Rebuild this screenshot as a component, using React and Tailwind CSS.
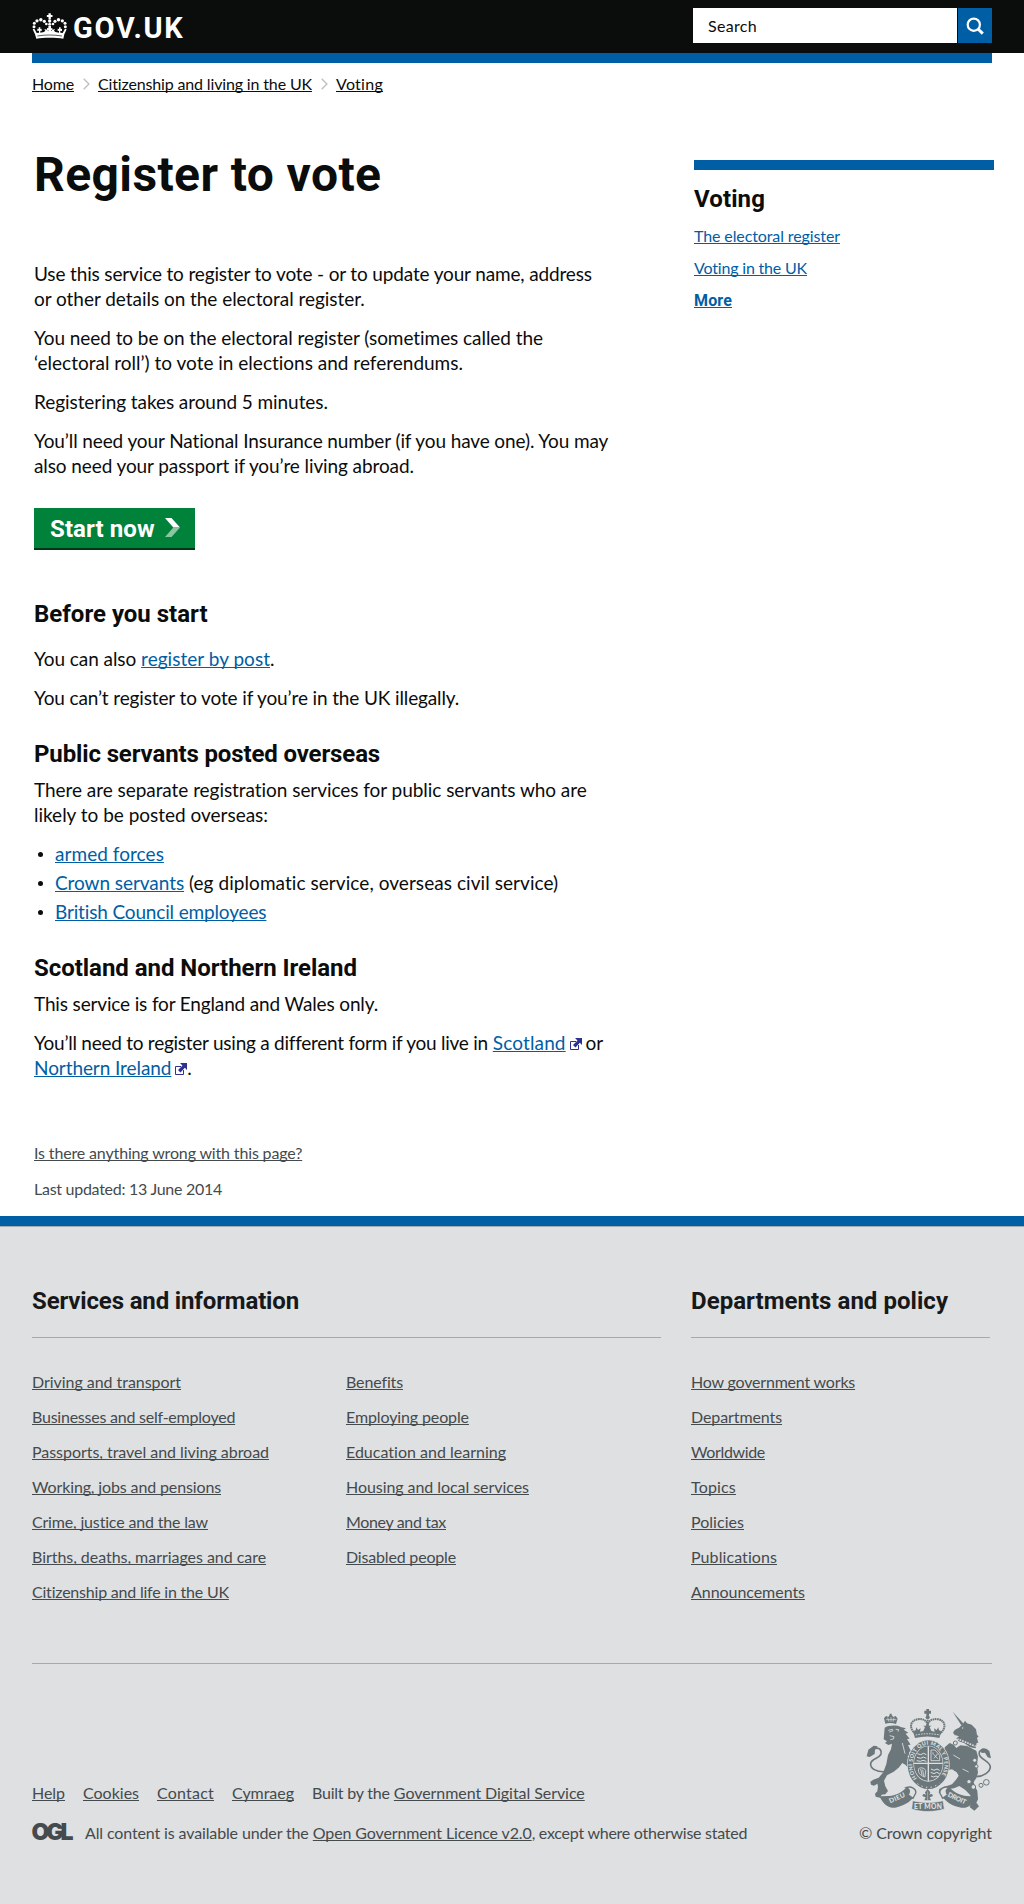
import React from "react";

const TEXT = "font-['Lato',sans-serif] font-normal";
const BOLD = "font-['Roboto',sans-serif] font-bold";
const UNDERLINE =
  "underline decoration-1 underline-offset-[1px] [text-decoration-skip-ink:none]";

function Link({ className = "", children }) {
  return (
    <a href="#" className={`${UNDERLINE} ${className}`}>
      {children}
    </a>
  );
}

function CrownIcon() {
  return (
    <svg width="35" height="27" viewBox="96 38 105 81" fill="#fff" aria-hidden="true">
      <path d="M145.500 39h7v5h5v6h-5v7h-7v-7h-5v-6h5z" />
      <circle cx="149" cy="62" r="5" />
      <circle cx="149" cy="72" r="4.500" />
      <circle cx="102" cy="79" r="4.500" />
      <circle cx="103" cy="69" r="4.500" />
      <circle cx="111" cy="61.500" r="5" />
      <circle cx="122.500" cy="58.500" r="5.200" />
      <circle cx="133" cy="63" r="4.800" />
      <circle cx="139" cy="71" r="4" />
      <circle cx="196" cy="79" r="4.500" />
      <circle cx="195" cy="69" r="4.500" />
      <circle cx="187" cy="61.500" r="5" />
      <circle cx="175.500" cy="58.500" r="5.200" />
      <circle cx="165" cy="63" r="4.800" />
      <circle cx="159" cy="71" r="4" />
      <path d="M98 87L103 85L110 98L117 97V91L112 92V85L116 86V81H121V86L125 85V92L121 91V97L132 95L136 91L133 86L141 88L145 93V89L141 90V83L145 84V77H153V84L157 83V90L153 89V93L157 88L165 86L162 91L166 95L177 97V91L173 92V85L177 86V81H182V86L186 85V92L181 91V97L188 98L195 85L200 87L193 102L190 115C168 111 130 111 109 115L105 102Z" />
      <path d="M112 107c22-4 51-4 74 0" fill="none" stroke="#0b0c0c" strokeWidth="2" />
    </svg>
  );
}

function SearchIcon() {
  return (
    <svg width="18" height="18" viewBox="0 0 18 18" fill="none" stroke="#fff" aria-hidden="true">
      <circle cx="7.800" cy="7.700" r="6.100" strokeWidth="2.200" />
      <path d="M12 12l4.800 4.600" strokeWidth="3" />
    </svg>
  );
}

function Chevron() {
  return (
    <svg width="7" height="12" viewBox="0 0 7 12" className="mr-2 ml-[9px] mt-px shrink-0" fill="none" stroke="#bfc1c3" strokeWidth="1.400" aria-hidden="true">
      <path d="M.7.7L5.900 6 .7 11.300" />
    </svg>
  );
}

function StartArrow() {
  return (
    <svg width="15" height="19" viewBox="0 0 15 19" className="-mt-[3px] ml-[10px]" aria-hidden="true">
      <path d="M0 0h6.500L15 9.500H8.300z" fill="#fff" />
      <path d="M8.300 9.500H15L6.500 19H0z" fill="#8cc5a2" />
    </svg>
  );
}

function ExternalIcon() {
  return (
    <svg width="12" height="12" viewBox="0 0 12 12" className="ml-1 inline-block align-baseline" aria-hidden="true">
      <path d="M6 3.500H.5v8h8V7" fill="none" stroke="#2e3191" />
      <path d="M5 0h7v7L9.800 4.800 5.500 9.500 3 7l4.500-4.500z" fill="#2e3191" />
    </svg>
  );
}

function OglLogo() {
  return (
    <svg width="42" height="19" viewBox="0 0 42 19" className="mr-[11px] shrink-0 overflow-visible" aria-label="OGL">
      <text x="-.5" y="16.500" textLength="42" lengthAdjust="spacing" fill="#454a4c" className="font-['Inter',sans-serif] text-[23px] font-black">
        OGL
      </text>
    </svg>
  );
}

function RoyalArms() {
  const c = "#6c777b";
  const bg = "#dee0e2";
  return (
    <svg width="128" height="103" viewBox="19 26 384 309" fill={c} className="-mr-[2px]" aria-hidden="true">
      <defs>
        <path id="garter" d="M172 234A48 59 0 1 1 240 234" />
      </defs>
      {/* crown above the shield */}
      <path d="M200 26h8v5h6v9h-6v6h-8v-6h-6v-9h6z" />
      <circle cx="204" cy="51" r="6" />
      <path d="M167 100C148 84 150 62 173 57C191 54 203 61 204 76C205 61 218 54 236 57C259 62 260 84 241 100" fill="none" stroke={c} strokeWidth="6" strokeDasharray="5 1.500" />
      <path d="M204 58v42" stroke={c} strokeWidth="6" strokeDasharray="5 1.500" />
      <path d="M160 93l8-3 2-9 5 8 8-5-2 10 10-2 5-12-6-4h9l4-8 4 8h9l-6 4 5 12 10 2-2-10 8 5 5-8 2 9 8 3-7 20c-24-6-48-6-73 0z" />
      <path d="M168 104c24-5 49-5 73 0" fill="none" stroke={bg} strokeWidth="2.500" strokeDasharray="5 3" />

      {/* lion */}
      <path d="M77 70l-4-16 6-7 7 3 4-6V40h6v4l5 6 7-3 6 8-5 16c-11-4-22-4-32-1z" />
      <path d="M79 58h31M84 52l4 12M103 52l-3 12M94 50v14" stroke={bg} strokeWidth="2" />
      <path d="M75 82c10-8 38-8 48-2l16 4-7 4 14 9-8 3 12 15-8 1 11 17-8 1 10 21-7-1 3 14-8-2 10 19 14 8 6 14-8 8-13-5-14-16-10-6-11 14-15 12-20 11-9 16 4 17 8 14-8 10-11 1-5 9-13-3-2-9 7-7 2-14-2-9-10 6-9-3-2-9 9-6 16-6 14-16 9-25 5-27 9-17 3-17-11 4-10-6 6-5-10-6z" />
      <path d="M86 90l12-3 2 4-11 4M108 87l9 1-2 6M90 106l13 3-2 7-9 2M128 128l8 32M112 208l14-10M92 222l-8 12" fill="none" stroke={bg} strokeWidth="2.500" />
      <path d="M76 214c-22 2-45-8-43-25 3-14 26-14 31-28 3-11-5-20-16-17-9 3-17 9-20 18" fill="none" stroke={c} strokeWidth="5" />
      <path d="M21 168l5-20 16-12 12 2-8 10-1 13-15 9z" />

      {/* unicorn */}
      <path d="M279 34l33 36-7 5z" />
      <path d="M304 76l8-8 4-7 6 8 14 4 13 14 3 17 5 4-5 5 4 15-5-1-3 17-17-3-18-13-16-5-7-9 8-6-13-4-5-7 5-8 15-8z" />
      <path d="M293 116c14 4 34 14 55 22" fill="none" stroke={bg} strokeWidth="5" strokeDasharray="5 3" />
      <circle cx="309" cy="83" r="2" fill={bg} />
      <path d="M256 140l14-12 12 5 8 10 12-8 20 2 28 14 5 18-3 26 3 22-5 16-8 12 3 12 8 14 2 26-5 10 8 11-14 13-14-11 5-13-3-22-15-16-18-12-16 7-22 3-12 14-12-4 2-11 14-6 24-8 12-14 8-12-6-10-14-9-11 2-11 14-9 0 6 8-10 2-8-12 12-20 18-4-3-8-17-1-12 8-6-8 4-8 15-3 18 0-2-7-10-6-8 7z" />
      <path d="M281 164l20 12M309 206l18 9" stroke={bg} strokeWidth="2.500" />
      <path d="M350 229c22-1 41-14 42-29 0-17-29-22-33-37-3-15 13-18 22-7" fill="none" stroke={c} strokeWidth="5" />
      <path d="M361 150c8-11 20-6 28 2l5 22-10-3-8-14-10 1z" />
      <g fill={bg} stroke={c} strokeWidth="3">
        <circle cx="287" cy="128" r="6" />
        <circle cx="345" cy="180" r="6" />
        <circle cx="350" cy="198" r="5" />
        <circle cx="328" cy="244" r="6.500" />
        <circle cx="341" cy="260" r="7" />
        <circle cx="364" cy="255" r="6" />
        <circle cx="380" cy="246" r="8.500" />
      </g>

      {/* garter and shield */}
      <ellipse cx="206" cy="193" rx="64" ry="75" fill={bg} />
      <ellipse cx="206" cy="193" rx="62" ry="73" />
      <ellipse cx="206" cy="190" rx="45" ry="54" fill={bg} />
      <ellipse cx="206" cy="190" rx="43" ry="52" />
      <path d="M206 138v104M163 189h86" stroke={bg} strokeWidth="4" />
      <path d="M173 160l10 3 9-4 8 4M172 171l11 3 8-4 9 4M171 181l11 2 8-3 10 3M214 206l9 4 9-4 8 4M213 216l10 4 8-4 9 4M214 227l8 3 7-3 7 3" fill="none" stroke={bg} strokeWidth="3" />
      <path d="M214 149h12l14 16v16h-26zM222 162l12 13M223 174l11-14M220 156v6" fill="none" stroke={bg} strokeWidth="2.500" />
      <path d="M177 205c8-6 20 0 21 6l-2 19c-15-4-22-14-19-25zM183 206l4 18M189 208l3 19" fill="none" stroke={bg} strokeWidth="2.500" />
      <text fill={bg} className="font-['Lato',sans-serif] text-[16px] font-black">
        <textPath href="#garter" textLength="246" lengthAdjust="spacing">HONI SOIT QUI MAL Y PENSE</textPath>
      </text>
      <path d="M173 250c20 15 47 15 66-1" fill="none" stroke={bg} strokeWidth="3" strokeDasharray="4 10" />

      {/* motto ribbon */}
      <path d="M59 288l29-1c22-2 40-11 53-27l23 12-2 18c-12 17-32 27-56 32-21 4-36-13-47-34z" />
      <path d="M353 289l-31-2c-22-2-40-11-53-27l-22 12 2 18c12 17 32 28 56 32 21 3 37-13 48-33z" />
      <path d="M139 262c16-6 32 4 29 17l-8 15-17-12c8-3 10-15-4-20zM270 262c-16-6-32 4-29 17l8 15 17-12c-8-3-10-15 4-20z" fill={bg} stroke={c} strokeWidth="4" />
      <path d="M159 301c26 7 66 7 91 0l4 25c-27 10-72 10-98 0z" stroke={bg} strokeWidth="2" />
      <g fill={bg} className="font-['Lato',sans-serif] text-[20px] font-black">
        <text x="92" y="309" transform="rotate(-24 92 309)" textLength="50" lengthAdjust="spacing">DIEU</text>
        <text x="163" y="326" textLength="84" lengthAdjust="spacing">ET MON</text>
        <text x="263" y="288" transform="rotate(25 263 288)" textLength="58" lengthAdjust="spacing">DROIT</text>
      </g>
      <path d="M204 266l8 10-3 9c5-7 12-4 10 3l-9 3 4 9h-20l4-9-9-3c-2-7 5-10 10-3l-3-9z" />
      <path d="M204 273v26" stroke={bg} strokeWidth="1.500" />
    </svg>
  );
}

function Paragraph({ className = "", children }) {
  return <p className={`leading-[25px] whitespace-nowrap ${className}`}>{children}</p>;
}

function Heading({ className = "", children }) {
  return (
    <h2 className={`${BOLD} text-2xl leading-[30px] whitespace-nowrap ${className}`}>{children}</h2>
  );
}

function Bullet({ children }) {
  return (
    <li className="flex items-center whitespace-nowrap">
      <span className="mt-0.5 mr-3 ml-1 size-[5px] shrink-0 rounded-full bg-[#0b0c0c]" />
      <span>{children}</span>
    </li>
  );
}

const services = [
  ["Driving and transport", "tracking-[-0.04px]"],
  ["Businesses and self-employed", "tracking-[-0.23px]"],
  ["Passports, travel and living abroad", "tracking-[-0.04px]"],
  ["Working, jobs and pensions", "tracking-[-0.13px]"],
  ["Crime, justice and the law", "tracking-[-0.17px]"],
  ["Births, deaths, marriages and care", "tracking-[-0.04px]"],
  ["Citizenship and life in the UK", "tracking-[-0.21px]"],
];

const information = [
  ["Benefits", "tracking-[-0.14px]"],
  ["Employing people", "tracking-[-0.12px]"],
  ["Education and learning", "tracking-[0.005px]"],
  ["Housing and local services", "tracking-[-0.06px]"],
  ["Money and tax", "tracking-[-0.34px]"],
  ["Disabled people", "tracking-[-0.18px]"],
];

const departments = [
  ["How government works", "tracking-[-0.19px]"],
  ["Departments", "tracking-[-0.1px]"],
  ["Worldwide", "tracking-[-0.35px]"],
  ["Topics", "tracking-[0.17px]"],
  ["Policies", "tracking-[0.03px]"],
  ["Publications", "tracking-[0.08px]"],
  ["Announcements", "tracking-[-0.05px]"],
];

function LinkList({ items, className = "" }) {
  return (
    <ul className={`flex flex-col gap-[10px] leading-[25px] ${className}`}>
      {items.map(([label, tracking]) => (
        <li key={label}>
          <Link className={tracking}>{label}</Link>
        </li>
      ))}
    </ul>
  );
}

function Header() {
  return (
    <header>
      <div className="flex h-[53px] items-start justify-between bg-[#0b0c0c] px-8">
        <a href="#" className="flex items-start pt-[13px]">
          <CrownIcon />
          <span className={`${BOLD} ml-[6px] text-[29px] leading-[30px] tracking-[1.7px] text-white`}>GOV.UK</span>
        </a>
        <form className="mt-2 flex h-[35px] gap-px">
          <div className="flex w-[264px] items-center bg-white pl-[15px] text-[#0b0c0c]">
            <span className="tracking-[0.32px]">Search</span>
          </div>
          <button type="button" className="flex w-[34px] items-center justify-center bg-[#005ea5]" aria-label="Search">
            <SearchIcon />
          </button>
        </form>
      </div>
      <div className="mx-8 h-[10px] bg-[#005ea5]" />
      <nav className="flex items-center px-8 pt-2 leading-[25px] whitespace-nowrap">
        <Link className="w-[42px] tracking-[-0.16px]">Home</Link>
        <Chevron />
        <Link className="w-[214px] tracking-[-0.15px]">Citizenship and living in the UK</Link>
        <Chevron />
        <Link className="tracking-[0.27px]">Voting</Link>
      </nav>
    </header>
  );
}

function Article() {
  return (
    <article className="w-[694px] shrink-0 pl-[34px] text-[19px]">
      <h1 className={`${BOLD} pt-[54px] text-5xl leading-[50px] tracking-[0.4px]`}>Register to vote</h1>
      <Paragraph className="mt-[61px]">
        <span className="tracking-[-0.15px]">Use this service to register to vote - or to update your name, address</span>
        <br />
        <span className="tracking-[-0.04px]">or other details on the electoral register.</span>
      </Paragraph>
      <Paragraph className="mt-[14px]">
        <span className="tracking-[-0.06px]">You need to be on the electoral register (sometimes called the</span>
        <br />
        <span className="tracking-[0.002px]">‘electoral roll’) to vote in elections and referendums.</span>
      </Paragraph>
      <Paragraph className="mt-[14px] tracking-[-0.07px]">Registering takes around 5 minutes.</Paragraph>
      <Paragraph className="mt-[14px]">
        <span className="tracking-[-0.11px]">You’ll need your National Insurance number (if you have one). You may</span>
        <br />
        <span className="tracking-[-0.1px]">also need your passport if you’re living abroad.</span>
      </Paragraph>

      <a href="#" className={`${BOLD} mt-[30px] flex h-10 w-[161px] items-center bg-[#00823b] pt-[2px] pl-4 text-2xl tracking-[0.1px] whitespace-nowrap text-white shadow-[0_2px_0_#003618]`}>
        Start now
        <StartArrow />
      </a>

      <Heading className="mt-[51px]">Before you start</Heading>
      <Paragraph className="mt-[17px]">
        <span className="tracking-[-0.06px]">You can also</span>{" "}
        <Link className="tracking-[0.03px] text-[#005ea5]">register by post</Link>.
      </Paragraph>
      <Paragraph className="mt-[14px] tracking-[-0.13px]">You can’t register to vote if you’re in the UK illegally.</Paragraph>

      <Heading className="mt-[29px] tracking-[-0.13px]">Public servants posted overseas</Heading>
      <Paragraph className="mt-2">
        <span className="tracking-[-0.05px]">There are separate registration services for public servants who are</span>
        <br />
        <span className="tracking-[-0.01px]">likely to be posted overseas:</span>
      </Paragraph>
      <ul className="mt-[14px] flex flex-col gap-1 leading-[25px]">
        <Bullet>
          <Link className="tracking-[0.05px] text-[#005ea5]">armed forces</Link>
        </Bullet>
        <Bullet>
          <Link className="tracking-[-0.06px] text-[#005ea5]">Crown servants</Link>{" "}
          <span className="tracking-[0.06px]">(eg diplomatic service, overseas civil service)</span>
        </Bullet>
        <Bullet>
          <Link className="tracking-[-0.15px] text-[#005ea5]">British Council employees</Link>
        </Bullet>
      </ul>

      <Heading className="mt-[29px] tracking-[-0.04px]">Scotland and Northern Ireland</Heading>
      <Paragraph className="mt-2 tracking-[-0.15px]">This service is for England and Wales only.</Paragraph>
      <Paragraph className="mt-[14px]">
        <span className="tracking-[-0.25px]">You’ll need to register using a different form if you live in</span>{" "}
        <Link className="tracking-[0.14px] text-[#005ea5]">
          Scotland
          <ExternalIcon />
        </Link>{" "}
        <span className="-ml-px">or</span>
        <br />
        <Link className="tracking-[-0.08px] text-[#005ea5]">
          Northern Ireland
          <ExternalIcon />
        </Link>
        .
      </Paragraph>

      <div className="mt-[60px] text-base leading-[25px] text-[#454a4c]">
        <p className="tracking-[-0.15px]">
          <Link>Is there anything wrong with this page?</Link>
        </p>
        <p className="mt-[11px] tracking-[-0.27px]">Last updated: 13 June 2014</p>
      </div>
    </article>
  );
}

function Sidebar() {
  return (
    <aside className="mt-16 w-[300px] shrink-0 self-start border-t-[10px] border-[#005ea5] pt-[14px]">
      <Heading className="tracking-[0.11px]">Voting</Heading>
      <ul className="mt-[9px] leading-[25px] text-[#005ea5]">
        <li>
          <Link className="tracking-[-0.11px]">The electoral register</Link>
        </li>
        <li className="mt-[7px]">
          <Link className="tracking-[-0.18px]">Voting in the UK</Link>
        </li>
        <li className={`${BOLD} mt-2`}>
          <Link className="tracking-[0.15px]">More</Link>
        </li>
      </ul>
    </aside>
  );
}

function Footer() {
  return (
    <footer className="mt-[15px] border-t-[10px] border-[#005ea5] text-[#454a4c]">
      <div className="h-[678px] border-t border-[#a1acb2] bg-[#dee0e2] px-8 pt-[59px] whitespace-nowrap">
        <div className="flex gap-[30px]">
          <section className="w-[629px]">
            <Heading className="tracking-[-0.15px] text-[#171819]">Services and information</Heading>
            <div className="mt-[21px] flex border-t border-[#a1acb2] pt-[31px]">
              <LinkList items={services} className="w-[314px]" />
              <LinkList items={information} />
            </div>
          </section>
          <section className="w-[299px]">
            <Heading className="tracking-[0.04px] text-[#171819]">Departments and policy</Heading>
            <div className="mt-[21px] border-t border-[#a1acb2] pt-[31px]">
              <LinkList items={departments} />
            </div>
          </section>
        </div>

        <div className="mt-[59px] flex items-end justify-between border-t border-[#a1acb2] pt-[45px]">
          <div className="leading-[25px]">
            <div className="flex gap-[18px]">
              <Link className="w-[33px] tracking-[-0.04px]">Help</Link>
              <Link className="w-[56px]">Cookies</Link>
              <Link className="w-[57px] tracking-[0.22px]">Contact</Link>
              <Link className="w-[62px] tracking-[-0.04px]">Cymraeg</Link>
              <span>
                <span className="tracking-[-0.22px]">Built by the</span>{" "}
                <Link className="tracking-[-0.06px]">Government Digital Service</Link>
              </span>
            </div>
            <div className="mt-[15px] flex items-center">
              <OglLogo />
              <span>
                <span className="tracking-[-0.13px]">All content is available under the</span>{" "}
                <Link className="tracking-[-0.12px]">Open Government Licence v2.0</Link>
                <span className="tracking-[-0.25px]">, except where otherwise stated</span>
              </span>
            </div>
          </div>
          <div className="flex flex-col items-end leading-[25px]">
            <RoyalArms />
            <span className="mt-2 tracking-[-0.07px]">© Crown copyright</span>
          </div>
        </div>
      </div>
    </footer>
  );
}

export default function App() {
  return (
    <div className={`${TEXT} w-full bg-white text-base text-[#0b0c0c]`}>
      <Header />
      <main className="flex">
        <Article />
        <Sidebar />
      </main>
      <Footer />
    </div>
  );
}
